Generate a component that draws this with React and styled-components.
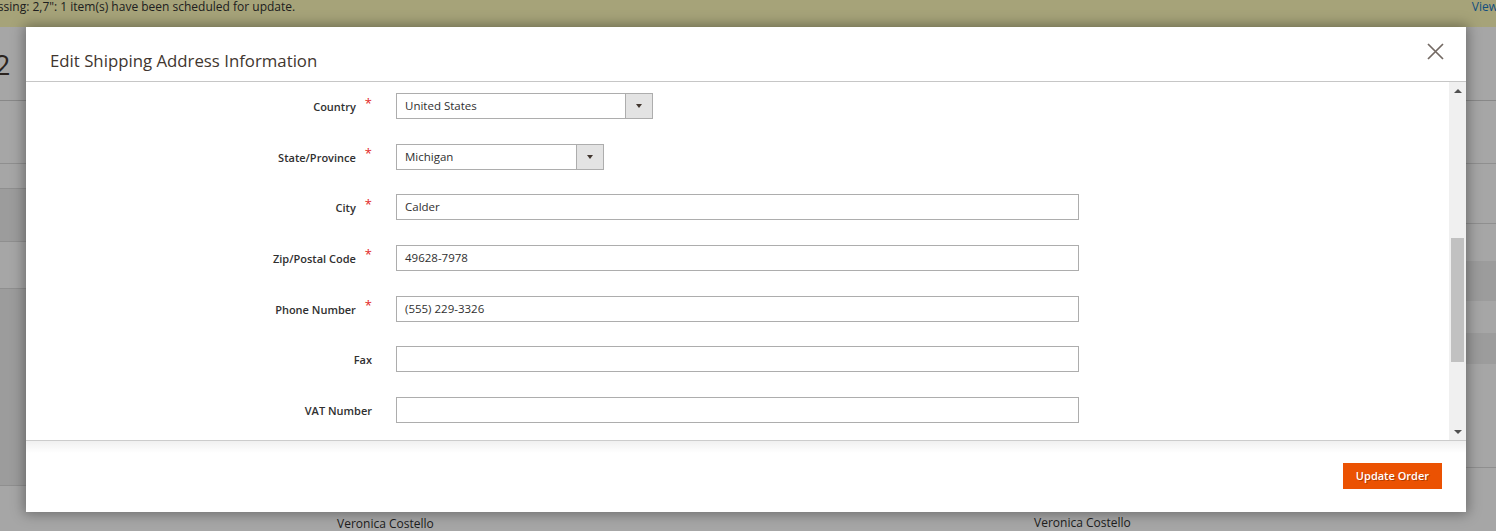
import React from "react";
import styled, { createGlobalStyle } from "styled-components";

const GlobalStyle = createGlobalStyle`
  html, body {
    margin: 0;
    padding: 0;
    height: 100%;
    overflow: hidden;
  }
  body {
    font-family: "Open Sans", "Liberation Sans", sans-serif;
    color: #303030;
    background: #ffffff;
  }
`;

// page behind the modal
const Page = styled.div`
  position: relative;
  width: 1496px;
  height: 531px;
  overflow: hidden;
`;

const MessageBar = styled.div`
  box-sizing: border-box;
  height: 27px;
  background: #fffbbb;
  display: flex;
  align-items: flex-start;
  justify-content: space-between;
  font-size: 12px;
  line-height: 14px;
  color: #303030;
  white-space: nowrap;
  overflow: hidden;
`;

const MessageText = styled.span`
  margin-left: -34px;
`;

const MessageLink = styled.a`
  color: #1979c3;
  text-decoration: none;
  margin-right: -2px;
`;

const PageTitle = styled.div`
  height: 73px;
  border-bottom: 1px solid #d1d1d1;
  display: flex;
  align-items: center;
  font-size: 28px;
  color: #41362f;
  overflow: hidden;
  white-space: nowrap;
`;

const TitleText = styled.span`
  margin-left: -159px;
`;

const Columns = styled.div`
  display: grid;
  grid-template-columns: 740px 1fr;
`;

const Column = styled.div`
  display: flex;
  flex-direction: column;
`;

const Band = styled.div`
  height: ${(p) => p.$h}px;
  background: ${(p) => (p.$dark ? "#f0f0f0" : "#ffffff")};
  border-bottom: ${(p) => (p.$line ? "1px solid #dcdcdc" : "none")};
  display: flex;
  align-items: flex-end;
  font-size: 12px;
  color: #303030;
`;

const Customer = styled.span`
  padding-left: ${(p) => p.$indent}px;
`;

const Overlay = styled.div`
  position: absolute;
  inset: 0;
  background: rgba(0, 0, 0, 0.35);
`;

// modal
const Modal = styled.div`
  position: absolute;
  left: 26px;
  top: 27px;
  width: 1440px;
  height: 485px;
  background: #ffffff;
  box-shadow: 0 0 12px 2px rgba(0, 0, 0, 0.35);
  display: flex;
  flex-direction: column;
`;

const ModalHeader = styled.header`
  height: 54px;
  border-bottom: 1px solid #c6c6c6;
  display: flex;
  align-items: center;
  justify-content: space-between;
  padding: 0 22px 0 24px;
`;

const ModalTitle = styled.h1`
  margin: 13px 0 0;
  font-size: 16.8px;
  font-weight: 400;
  color: #41362f;
`;

const CloseButton = styled.button`
  border: 0;
  background: none;
  padding: 0;
  width: 17px;
  height: 17px;
  margin-top: -5px;
  cursor: pointer;
  display: flex;
`;

const ModalBody = styled.div`
  height: 358px;
  border-bottom: 1px solid #cccccc;
  display: flex;
`;

const Form = styled.div`
  flex: 1;
  display: grid;
  grid-template-columns: 346px 683px;
  column-gap: 24px;
  row-gap: 24.67px;
  align-content: start;
  padding-top: 11px;
`;

const Label = styled.label`
  display: flex;
  align-items: center;
  justify-content: flex-end;
  font-size: 11px;
  font-weight: 600;
  color: #303030;
  padding-top: 1px;
`;

const Asterisk = styled.span`
  color: #e22626;
  font-size: 13px;
  margin-left: 9px;
  margin-top: -8px;
  font-weight: 400;
`;

const Field = styled.div`
  display: flex;
`;

const Input = styled.div`
  box-sizing: border-box;
  width: ${(p) => p.$w || 683}px;
  height: 26px;
  border: 1px solid #adadad;
  display: flex;
  align-items: center;
  padding-left: 8px;
  padding-bottom: 1px;
  font-size: 11.5px;
  color: #303030;
  background: #ffffff;
`;

const Select = styled(Input)`
  padding-right: 0;
  padding-bottom: 0;
  justify-content: space-between;
`;

const SelectValue = styled.span`
  margin-bottom: 1px;
`;

const SelectArrow = styled.span`
  width: 26px;
  height: 100%;
  border-left: 1px solid #adadad;
  background: #e3e3e3;
  display: flex;
  align-items: center;
  justify-content: center;
`;

const Caret = styled.span`
  width: 0;
  height: 0;
  border-left: 3px solid transparent;
  border-right: 3px solid transparent;
  border-top: 4px solid #41362f;
`;

const Scrollbar = styled.div`
  width: 17px;
  background: #f0f0f0;
  display: flex;
  flex-direction: column;
  align-items: center;
`;

const ScrollArrow = styled.span`
  height: 17px;
  display: flex;
  align-items: center;
  justify-content: center;
  &::before {
    content: "";
    border-left: 4px solid transparent;
    border-right: 4px solid transparent;
    ${(p) =>
      p.$down
        ? "border-top: 4px solid #505050;"
        : "border-bottom: 4px solid #505050;"}
  }
`;

const Track = styled.div`
  flex: 1;
  width: 100%;
  display: flex;
  justify-content: center;
  padding-top: 139px;
  box-sizing: border-box;
`;

const Thumb = styled.div`
  width: 13px;
  height: 124px;
  background: #c1c1c1;
`;

const ModalFooter = styled.footer`
  flex: 1;
  display: flex;
  align-items: center;
  justify-content: flex-end;
  padding: 0 24px 0 0;
  background: linear-gradient(to bottom, rgba(0, 0, 0, 0.06), rgba(0, 0, 0, 0) 12px);
`;

const PrimaryButton = styled.button`
  height: 26px;
  padding: 0 13px;
  background: #eb5202;
  border: 0;
  color: #ffffff;
  font-family: "Open Sans", "Liberation Sans", sans-serif;
  font-size: 11px;
  font-weight: 600;
  text-shadow: 1px 1px 0 rgba(0, 0, 0, 0.25);
  margin-top: -2px;
  cursor: pointer;
`;

const fields = [
  { label: "Country", required: true, value: "United States", select: 257 },
  { label: "State/Province", required: true, value: "Michigan", select: 208 },
  { label: "City", required: true, value: "Calder" },
  { label: "Zip/Postal Code", required: true, value: "49628-7978" },
  { label: "Phone Number", required: true, value: "(555) 229-3326" },
  { label: "Fax", required: false, value: "" },
  { label: "VAT Number", required: false, value: "" },
];

const CloseIcon = () => (
  <svg width="17" height="17" viewBox="0 0 17 17">
    <path d="M1 1 L16 16 M16 1 L1 16" stroke="#736963" strokeWidth="1.7" fill="none" />
  </svg>
);

const App = () => (
  <>
    <GlobalStyle />
    <Page>
      <MessageBar>
        <MessageText>Processing: 2,7": 1 item(s) have been scheduled for update.</MessageText>
        <MessageLink href="#">View</MessageLink>
      </MessageBar>
      <PageTitle>
        <TitleText># 000000002</TitleText>
      </PageTitle>
      <Columns>
        <Column>
          <Band $h={62} $line />
          <Band $h={24} $line />
          <Band $h={52} $dark $line />
          <Band $h={46} $line />
          <Band $h={196} $dark $line />
          <Band $h={46}>
            <Customer $indent={337}>Veronica Costello</Customer>
          </Band>
        </Column>
        <Column>
          <Band $h={62} $line />
          <Band $h={59} $line />
          <Band $h={37} />
          <Band $h={40} $dark />
          <Band $h={32} />
          <Band $h={31} $dark />
          <Band $h={103} $line />
          <Band $h={63}>
            <Customer $indent={294}>Veronica Costello</Customer>
          </Band>
        </Column>
      </Columns>
      <Overlay />

      <Modal>
        <ModalHeader>
          <ModalTitle>Edit Shipping Address Information</ModalTitle>
          <CloseButton aria-label="Close">
            <CloseIcon />
          </CloseButton>
        </ModalHeader>
        <ModalBody>
          <Form>
            {fields.map((f) => (
              <React.Fragment key={f.label}>
                <Label>
                  {f.label}
                  {f.required && <Asterisk>*</Asterisk>}
                </Label>
                <Field>
                  {f.select ? (
                    <Select $w={f.select}>
                      <SelectValue>{f.value}</SelectValue>
                      <SelectArrow>
                        <Caret />
                      </SelectArrow>
                    </Select>
                  ) : (
                    <Input>{f.value}</Input>
                  )}
                </Field>
              </React.Fragment>
            ))}
          </Form>
          <Scrollbar>
            <ScrollArrow />
            <Track>
              <Thumb />
            </Track>
            <ScrollArrow $down />
          </Scrollbar>
        </ModalBody>
        <ModalFooter>
          <PrimaryButton>Update Order</PrimaryButton>
        </ModalFooter>
      </Modal>
    </Page>
  </>
);

export default App;
